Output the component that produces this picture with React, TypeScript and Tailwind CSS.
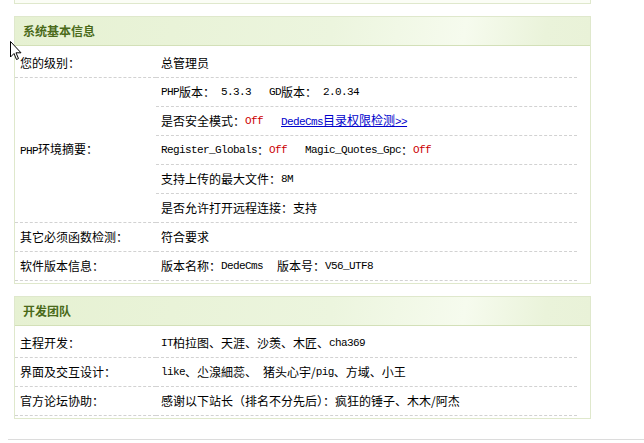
import React, { type ReactNode } from 'react';

// latin runs are half-width in the original (SimSun 12px), so squeeze a mono to 6px per char
const M = ({ children, className = '' }: { children: ReactNode; className?: string }) => (
  <span className={`font-['Liberation_Mono',monospace] text-[11px] tracking-[-0.6px] whitespace-pre ${className}`}>{children}</span>
);

const Off = () => <M className="text-[#cc0000]">Off</M>;

const Cell = ({ children }: { children: ReactNode }) => (
  <div className="h-[28px] flex items-center whitespace-nowrap">{children}</div>
);

const labelTd = 'w-[141px] p-0 pl-[5px] border-b border-dashed border-[#d2d2d2] align-middle';
const valueTd = 'p-0 pl-[5px] border-b border-dashed border-[#d2d2d2]';

const Row = ({ label, children }: { label?: ReactNode; children: ReactNode }) => (
  <tr>
    {label !== undefined && (
      <td className={labelTd}>
        <Cell>{label}</Cell>
      </td>
    )}
    <td className={valueTd}>
      <Cell>{children}</Cell>
    </td>
  </tr>
);

const Panel = ({ title, children }: { title: string; children: ReactNode }) => (
  <div className="ml-[14px] w-[577px] border border-[#dfe8cc] bg-white">
    <div className="h-[29px] border-b border-[#d3e0b8] bg-[linear-gradient(100deg,#e6f1d2_0%,#ecf5de_55%,#f6fbee_78%,#eaf3da_92%,#e9f2d8_100%)] flex items-center pl-[8px]">
      <span className="font-bold text-[12px] text-[#4a6a1a]">{title}</span>
    </div>
    <table className="w-[562px] mt-[3px] mb-[2px]">
      <tbody>{children}</tbody>
    </table>
  </div>
);

export default function App() {
  return (
    <div className="relative w-[644px] h-[443px] bg-white overflow-hidden font-['Noto_Sans_CJK_SC','Liberation_Sans',sans-serif] text-[12px] text-black">
      {/* bottom of the panel above */}
      <div className="ml-[14px] w-[577px] h-[4px] border-x border-b border-[#dfe8cc] bg-[#fbfdf6]" />

      <div className="mt-[12px]">
        <Panel title="系统基本信息">
          <Row label="您的级别：">总管理员</Row>
          <tr>
            <td rowSpan={5} className={labelTd}>
              <span><M>PHP</M>环境摘要：</span>
            </td>
            <td className={valueTd}>
              <Cell>
                <M>PHP</M>版本：<M> 5.3.3   GD</M>版本：<M> 2.0.34</M>
              </Cell>
            </td>
          </tr>
          <Row>
            是否安全模式：<Off />
            <a href="#" className="ml-[18px] text-[#0000cc] underline">
              <M>DedeCms</M>目录权限检测<M>&gt;&gt;</M>
            </a>
          </Row>
          <Row>
            <M>Register_Globals</M>：<Off />
            <M>   Magic_Quotes_Gpc</M>：<Off />
          </Row>
          <Row>
            支持上传的最大文件：<M>8M</M>
          </Row>
          <Row>是否允许打开远程连接：支持</Row>
          <Row label="其它必须函数检测：">符合要求</Row>
          <Row label="软件版本信息：">
            版本名称：<M>DedeCms</M>
            <span className="ml-[14px]">版本号：</span>
            <M>V56_UTF8</M>
          </Row>
        </Panel>
      </div>

      <div className="mt-[12px]">
        <Panel title="开发团队">
          <Row label="主程开发：">
            <M>IT</M>柏拉图、天涯、沙羡、木匠、<M>cha369</M>
          </Row>
          <Row label="界面及交互设计：">
            <M>like</M>、尐湶細蕊、<M> </M>猪头心宇/<M>pig</M>、方域、小王
          </Row>
          <Row label="官方论坛协助：">感谢以下站长（排名不分先后）：疯狂的锤子、木木/阿杰</Row>
        </Panel>
      </div>

      <div className="mt-[20px] ml-[8px] border-t border-[#dcdcdc]" />

      {/* mouse pointer captured in the screenshot */}
      <svg className="absolute left-[10px] top-[41px]" width="13" height="20" viewBox="0 0 13 20">
        <path d="M0.5 0.5 L0.5 16 L4 12.5 L6.5 18.5 L8.5 17.6 L6 11.8 L11 11.8 Z" fill="#fff" stroke="#000" strokeWidth="1" />
      </svg>
    </div>
  );
}
